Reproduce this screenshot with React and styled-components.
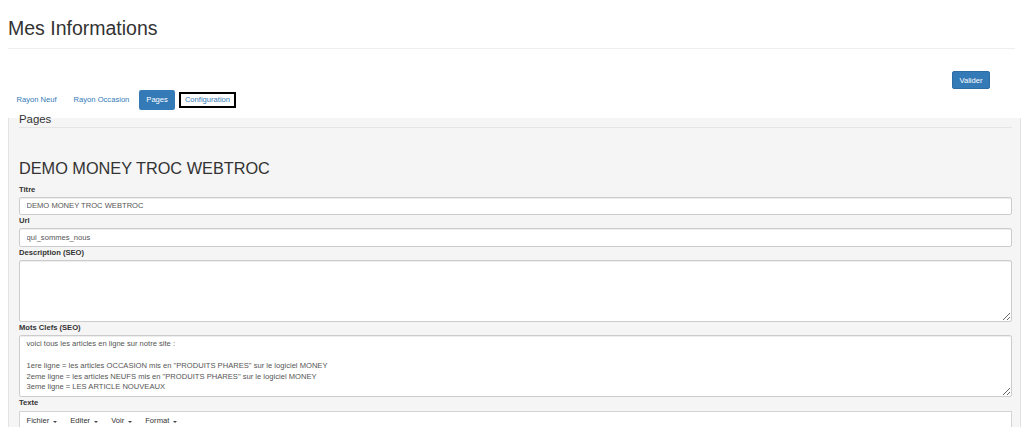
import React from "react";
import styled, { createGlobalStyle } from "styled-components";

const GlobalStyle = createGlobalStyle`
  html, body {
    margin: 0;
    padding: 0;
    overflow: hidden;
    background: #fff;
  }
  body {
    font-family: "Liberation Sans", Arial, sans-serif;
    font-size: 7.6px;
    line-height: 10.86px;
    color: #333;
  }
  * {
    box-sizing: border-box;
  }
`;

const Page = styled.div`
  padding: 0 3px 0 8px;
`;

const Header = styled.div`
  padding: 18px 0 9px;
  margin-right: 6px;
  border-bottom: 1px solid #eee;
`;

const Title = styled.h1`
  margin: 0;
  font-size: 19.5px;
  line-height: 21px;
  font-weight: 400;
  color: #333;
`;

const ActionRow = styled.div`
  display: flex;
  justify-content: flex-end;
  padding-right: 31px;
  margin-top: 22px;
`;

const Button = styled.button`
  height: 18px;
  padding: 0 6.5px;
  font-family: inherit;
  font-size: 7.6px;
  color: #fff;
  background: #337ab7;
  border: 1px solid #2e6da4;
  border-radius: 2px;
`;

const Tabs = styled.ul`
  display: flex;
  list-style: none;
  margin: 1px 0 0 1px;
  padding: 0;
`;

const Tab = styled.li`
  margin-left: ${(p) => (p.$first ? "0" : "2px")};
`;

const TabLink = styled.a`
  display: block;
  height: 20px;
  line-height: 20px;
  padding: 0 7.5px;
  border-radius: 2.2px;
  font-size: 7.6px;
  text-decoration: none;
  color: ${(p) => (p.$active ? "#fff" : "#337ab7")};
  background: ${(p) => (p.$active ? "#337ab7" : "transparent")};
  outline: ${(p) => (p.$focused ? "2px solid #000" : "none")};
  outline-offset: -4px;
`;

const Panel = styled.div`
  display: flex;
  flex-direction: column;
  margin-top: 8px;
  padding: 0 8px 0 10px;
  background: #f5f5f5;
  border: 1px solid #e3e3e3;
  border-top: 0;

  & > * {
    flex-shrink: 0;
  }
`;

const Legend = styled.div`
  margin-top: -7px;
  font-size: 11.4px;
  line-height: 16.3px;
  color: #333;
  border-bottom: 1px solid #e5e5e5;
`;

const PageTitle = styled.h2`
  margin: 31.5px 0 6px;
  font-size: 16.3px;
  line-height: 17.9px;
  font-weight: 400;
  color: #333;
`;

const Label = styled.label`
  display: block;
  font-weight: 700;
  line-height: 11px;
  margin-bottom: 2px;
`;

const Input = styled.input`
  display: block;
  width: 100%;
  height: 18.5px;
  padding: 3.3px 6.5px;
  font-family: inherit;
  font-size: 7.6px;
  color: #555;
  background: #fff;
  border: 1px solid #ccc;
  border-radius: 2.2px;
  box-shadow: inset 0 1px 1px rgba(0, 0, 0, 0.075);
`;

const TextArea = styled.textarea`
  display: block;
  width: 100%;
  height: 62px;
  padding: 3.3px 6.5px;
  font-family: inherit;
  font-size: 7.6px;
  line-height: 10.86px;
  color: #555;
  background: #fff;
  border: 1px solid #ccc;
  border-radius: 2.2px;
  overflow: hidden;
  box-shadow: inset 0 1px 1px rgba(0, 0, 0, 0.075);
`;

const Editor = styled.div`
  margin-top: 1px;
  height: 80px;
  background: #fff;
  border: 1px solid #d4d4d4;
`;

const MenuBar = styled.div`
  display: flex;
  height: 20px;
  align-items: center;
  background: #fff;
`;

const MenuItem = styled.span`
  display: flex;
  align-items: center;
  padding: 0 6.5px;
  color: #333;
`;

const Caret = styled.span`
  margin-left: 4px;
  width: 0;
  height: 0;
  border-top: 2.5px solid #444;
  border-left: 2.5px solid transparent;
  border-right: 2.5px solid transparent;
`;

const keywords =
  'voici tous les articles en ligne sur notre site :\n\n1ere ligne = les articles OCCASION mis en "PRODUITS PHARES" sur le logiciel MONEY\n2eme ligne = les articles NEUFS mis en "PRODUITS PHARES" sur le logiciel MONEY\n3eme ligne = LES ARTICLE NOUVEAUX';

const tabs = [
  { label: "Rayon Neuf" },
  { label: "Rayon Occasion" },
  { label: "Pages", active: true },
  { label: "Configuration", focused: true },
];

const menus = ["Fichier", "Editer", "Voir", "Format"];

export default function App() {
  return (
    <>
      <GlobalStyle />
      <Page>
        <Header>
          <Title>Mes Informations</Title>
        </Header>
        <ActionRow>
          <Button>Valider</Button>
        </ActionRow>
        <Tabs>
          {tabs.map((t, i) => (
            <Tab key={t.label} $first={i === 0}>
              <TabLink href="#" $active={t.active} $focused={t.focused}>
                {t.label}
              </TabLink>
            </Tab>
          ))}
        </Tabs>
        <Panel>
          <Legend>Pages</Legend>
          <PageTitle>DEMO MONEY TROC WEBTROC</PageTitle>
          <Label>Titre</Label>
          <Input defaultValue="DEMO MONEY TROC WEBTROC" />
          <Label>Url</Label>
          <Input defaultValue="qui_sommes_nous" />
          <Label>Description (SEO)</Label>
          <TextArea defaultValue="" />
          <Label>Mots Clefs (SEO)</Label>
          <TextArea defaultValue={keywords} />
          <Label>Texte</Label>
          <Editor>
            <MenuBar>
              {menus.map((m) => (
                <MenuItem key={m}>
                  {m}
                  <Caret />
                </MenuItem>
              ))}
            </MenuBar>
          </Editor>
        </Panel>
      </Page>
    </>
  );
}
